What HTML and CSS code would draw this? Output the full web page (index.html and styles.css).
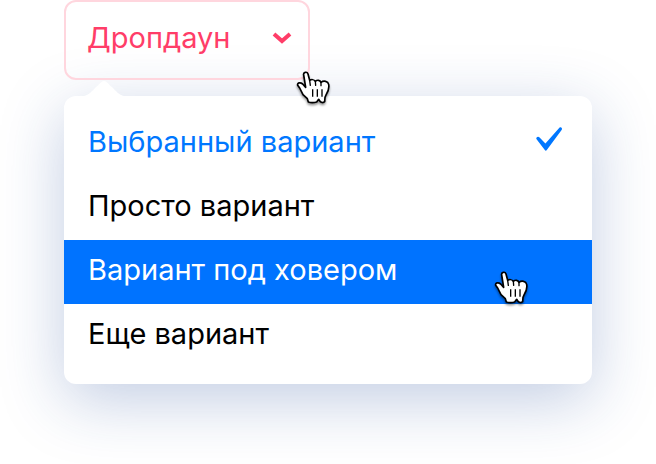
FILE: index.html
```html
<!DOCTYPE html>
<html lang="ru">
<head>
<meta charset="utf-8">
<title>Дропдаун</title>
<link rel="stylesheet" href="styles.css">
</head>
<body>
<svg class="defs" aria-hidden="true">
  <symbol id="hand" viewBox="0 0 102 102">
    <path d="M23 15C21 7 33 3 36 12L41 31C46 28 54 28 58 34C64 29 72 30 75 37C83 31 96 33 98 43C100 54 96 66 90 75L87 82L86 95C82 99 76 98 73 95L68 88L62 96C54 98 44 98 37 96L34 86L21 74L11 54L5 46C3 38 13 36 20 42L29 52Z" fill="#fff" stroke="#000" stroke-width="5" stroke-linejoin="round"/>
    <path d="M41 31L43 46M58 34L59 46M75 37V47" fill="none" stroke="#000" stroke-width="4" stroke-linecap="round"/>
    <path d="M50 58V80M64 58V80M78 58V80" fill="none" stroke="#000" stroke-width="4"/>
  </symbol>
</svg>
<main class="dropdown">
  <button class="toggle" type="button" aria-haspopup="listbox" aria-expanded="true">
    <span>Дропдаун</span>
    <svg class="chevron" viewBox="0 0 20 12" aria-hidden="true"><path d="M2 2L10 9L18 2"/></svg>
    <svg class="cursor cursor-toggle" aria-hidden="true"><use href="#hand"/></svg>
  </button>
  <div class="menu">
    <svg class="arrow" viewBox="0 0 40 16" aria-hidden="true"><path d="M0 16C5 15 8 11 12 7C16 4 17 1 20 1S24 4 28 7C32 11 35 15 40 16Z"/></svg>
    <button class="item selected" type="button">
      <span>Выбранный вариант</span>
      <svg class="check" viewBox="0 0 26 24" aria-hidden="true"><path d="M0.4 12C-0.3 10 2.2 8.8 3.6 10.4L9.4 16.4L23.6 0.6C25 -0.4 26.6 1.2 25.8 2.8L10.8 23C10.2 24 9.4 24 8.8 23Z"/></svg>
    </button>
    <button class="item" type="button">Просто вариант</button>
    <button class="item hovered" type="button">
      <span>Вариант под ховером</span>
      <svg class="cursor cursor-item" aria-hidden="true"><use href="#hand"/></svg>
    </button>
    <button class="item" type="button">Еще вариант</button>
  </div>
</main>
</body>
</html>
```
FILE: styles.css
```css
* {
  box-sizing: border-box;
}

body {
  margin: 0;
  background: #fff;
  font-family: Inter, "Liberation Sans", sans-serif;
}

button {
  font: inherit;
  color: inherit;
  cursor: pointer;
}

.defs {
  position: absolute;
  width: 0;
  height: 0;
}

.dropdown {
  display: flex;
  flex-direction: column;
  align-items: flex-start;
  gap: 16px;
  padding: 0 64px 80px;
  font-size: 29px;
  line-height: 36px;
}

.toggle {
  position: relative;
  z-index: 1;
  display: flex;
  align-items: center;
  gap: 42px;
  padding: 18px 16px 22px 21px;
  border: 2px solid #ffd6de;
  border-radius: 12px;
  background: transparent;
  color: #ff3d68;
}

.chevron {
  width: 20px;
  height: 12px;
  overflow: visible;
  fill: none;
  stroke: currentColor;
  stroke-width: 4;
}

.menu {
  position: relative;
  align-self: stretch;
  padding: 16px 0;
  border-radius: 12px;
  background: #fff;
  box-shadow: 0 16px 64px rgba(30, 70, 150, 0.27);
}

.arrow {
  position: absolute;
  left: 20px;
  bottom: 100%;
  width: 40px;
  height: 16px;
  fill: #fff;
}

.item {
  position: relative;
  display: flex;
  align-items: center;
  justify-content: space-between;
  width: 100%;
  padding: 12px 30px 16px 24px;
  border: 0;
  background: transparent;
  color: #000;
  text-align: left;
}

.selected {
  color: #0077ff;
}

.hovered {
  background: #0073ff;
  color: #fff;
}

.check {
  width: 26px;
  height: 24px;
  margin-bottom: 6px;
  overflow: visible;
  fill: currentColor;
}

.cursor {
  position: absolute;
  width: 34px;
  height: 34px;
  filter: drop-shadow(0 2px 1px rgba(0, 0, 0, 0.4));
}

.cursor-toggle {
  top: 68px;
  right: -22px;
}

.cursor-item {
  top: 30px;
  right: 64px;
}
```
